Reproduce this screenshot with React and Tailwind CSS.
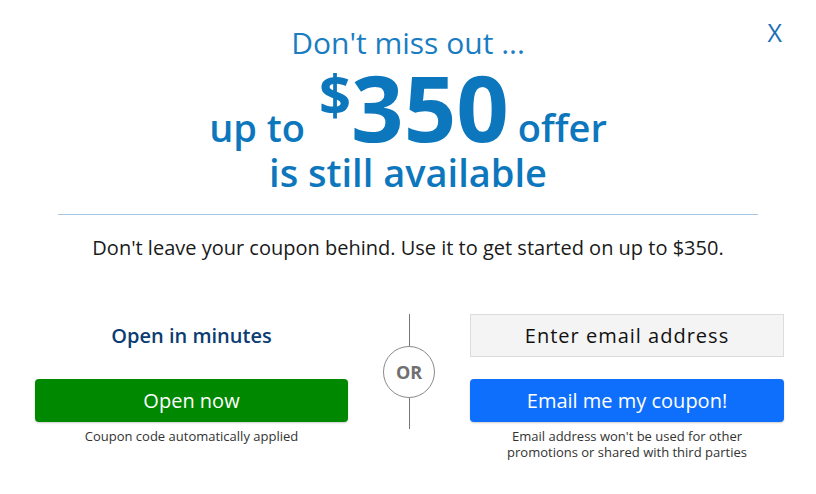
import React from "react";

export default function App() {
  return (
    <div className="relative w-[816px] h-[494px] bg-white overflow-hidden" style={{ fontFamily: '"Open Sans", "Liberation Sans", sans-serif' }}>
      <button className="absolute right-[34px] top-[16px] text-[25px] leading-[32px] text-[#1b6fb4] font-normal">X</button>

      <div className="flex flex-col items-center pt-[25px] text-[#0d77bd]">
        <div className="text-[30px] leading-[36px] text-[#1a7dc2]">Don't miss out ...</div>
        <div className="flex items-baseline">
          <span className="text-[38px] leading-none font-semibold mr-[14px]">up to</span>
          <span className="self-start mt-[4px] text-[56px] leading-none font-bold">$</span>
          <span className="text-[92px] leading-none font-bold">350</span>
          <span className="text-[38px] leading-none font-semibold ml-[9px]">offer</span>
        </div>
        <div className="text-[38px] leading-none font-semibold">is still available</div>
      </div>

      <div className="mx-auto mt-[23px] w-[700px] h-px bg-[#a6c6e6]" />

      <div className="mt-[19px] text-center text-[20px] leading-[28px] text-[#1a1a1a]">
        Don't leave your coupon behind. Use it to get started on up to $350.
      </div>

      <div className="flex mt-[52px] pl-[35px]">
        <div className="w-[313px] flex flex-col items-center">
          <div className="h-[43px] flex items-center text-[20px] font-semibold text-[#0b3c72]">Open in minutes</div>
          <button className="mt-[22px] w-full h-[43px] rounded-[4px] bg-[#008800] text-white text-[20px] shadow-[0_1px_2px_rgba(0,0,0,0.2)]">Open now</button>
          <div className="mt-[6px] text-[13px] leading-[16px] text-[#333]">Coupon code automatically applied</div>
        </div>

        <div className="w-[122px] flex flex-col items-center">
          <div className="w-px h-[32px] bg-[#777]" />
          <div className="w-[52px] h-[52px] rounded-full border border-[#8a8a8a] flex items-center justify-center text-[18px] font-bold text-[#707070]">OR</div>
          <div className="w-px h-[31px] bg-[#777]" />
        </div>

        <div className="w-[314px] flex flex-col items-center">
          <div className="w-full h-[43px] flex items-center justify-center bg-[#f4f4f4] border border-[#dcdcdc] text-[20px] tracking-[1px] text-[#111]">Enter email address</div>
          <button className="mt-[22px] w-full h-[43px] rounded-[4px] bg-[#0f6ffd] text-white text-[20px] shadow-[0_1px_2px_rgba(0,0,0,0.2)]">Email me my coupon!</button>
          <div className="mt-[6px] text-center text-[13px] leading-[16px] text-[#333]">
            Email address won't be used for other<br />promotions or shared with third parties
          </div>
        </div>
      </div>
    </div>
  );
}
